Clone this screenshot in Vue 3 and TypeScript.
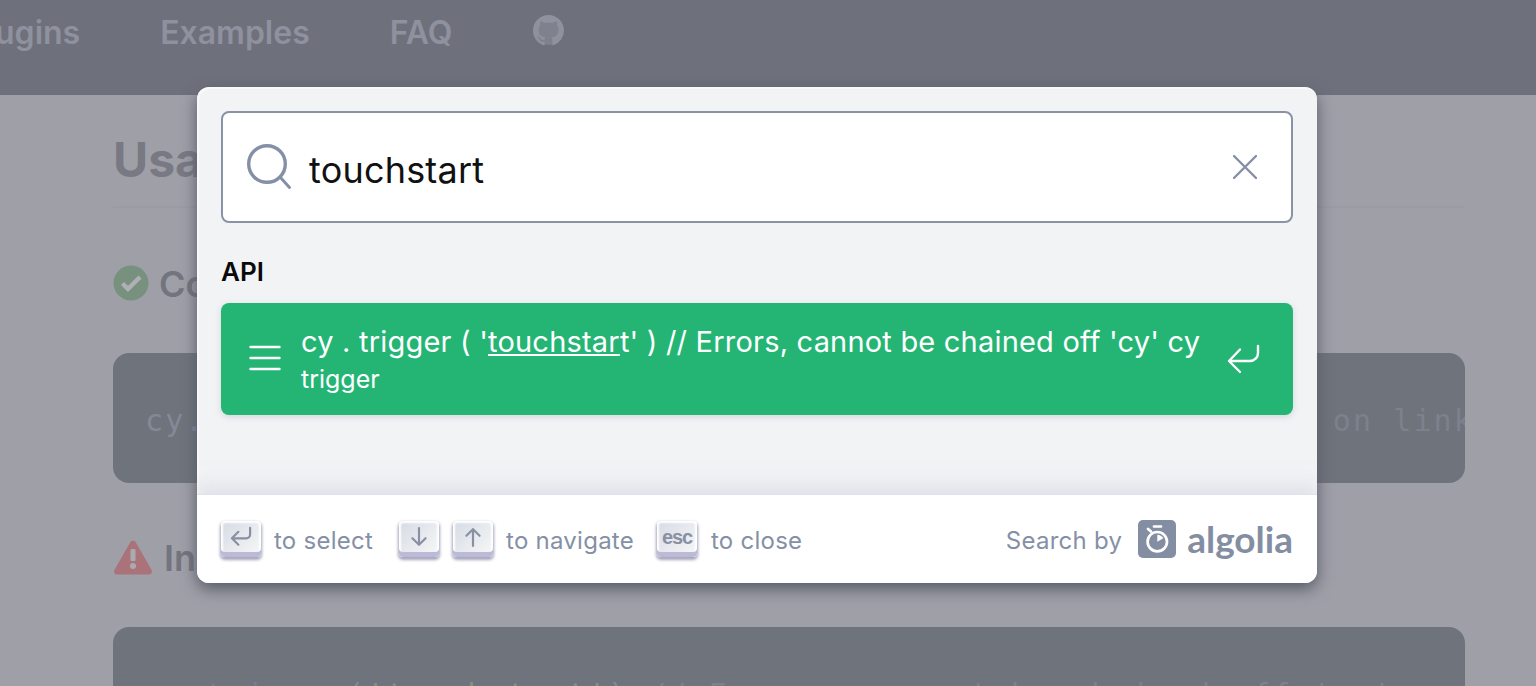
<script setup lang="ts">
const navItems = ['Plugins', 'Examples', 'FAQ']

const hit = {
  before: "cy . trigger ( '",
  match: 'touchstar',
  after: "t' ) // Errors, cannot be chained off 'cy' cy",
  path: 'trigger',
}
</script>

<template>
  <div class="page">
    <header class="topbar">
      <nav class="nav">
        <a v-for="item in navItems" :key="item" class="nav-link">{{ item }}</a>
        <svg class="gh" viewBox="0 0 16 16" width="31" height="31">
          <circle cx="8" cy="8" r="7.5" fill="currentColor" opacity="0.5" />
          <path
            fill="currentColor"
            d="M8 0C3.58 0 0 3.58 0 8c0 3.54 2.29 6.53 5.47 7.59.4.07.55-.17.55-.38 0-.19-.01-.82-.01-1.49-2.01.37-2.53-.49-2.69-.94-.09-.23-.48-.94-.82-1.13-.28-.15-.68-.52-.01-.53.63-.01 1.08.58 1.23.82.72 1.21 1.87.87 2.33.66.07-.52.28-.87.51-1.07-1.78-.2-3.64-.89-3.64-3.95 0-.87.31-1.59.82-2.15-.08-.2-.36-1.02.08-2.12 0 0 .67-.21 2.2.82.64-.18 1.32-.27 2-.27.68 0 1.36.09 2 .27 1.53-1.04 2.2-.82 2.2-.82.44 1.1.16 1.92.08 2.12.51.56.82 1.27.82 2.15 0 3.07-1.87 3.75-3.65 3.95.29.25.54.73.54 1.48 0 1.07-.01 1.93-.01 2.2 0 .21.15.46.55.38A8.01 8.01 0 0 0 16 8c0-4.42-3.58-8-8-8z"
          />
        </svg>
      </nav>
    </header>

    <main class="content">
      <h2 class="title">Usage</h2>

      <h3 class="subtitle">
        <svg class="sub-icon" viewBox="0 0 36 36" width="36" height="36">
          <circle cx="18" cy="18" r="17.5" fill="#78917f" />
          <path d="M9.5 18.5l5.5 5.5 12-12" fill="none" stroke="#aeb0b6" stroke-width="4.4" />
        </svg>
        <span class="sub-text">Correct Usage</span>
      </h3>
      <div class="code"><span class="c-name">cy</span><span class="c-punct">.</span><span class="c-fn">get</span><span class="c-punct">(</span><span class="c-str">'a'</span><span class="c-punct">).</span><span class="c-fn">trigger</span><span class="c-punct">(</span><span class="c-str">'touchstart'</span><span class="c-punct">)</span> <span class="c-comment">// Triggers 'touchstart' on link</span></div>

      <h3 class="subtitle sub-bad">
        <svg class="sub-icon warn-icon" viewBox="0 0 40 36" width="40" height="36">
          <path d="M20 1.5a3 3 0 0 1 2.6 1.5l16 28a3 3 0 0 1-2.6 4.5H4a3 3 0 0 1-2.6-4.5l16-28A3 3 0 0 1 20 1.5z" fill="#aa7279" />
          <rect x="17.5" y="10" width="5" height="12" rx="1" fill="#a9abb0" />
          <circle cx="20" cy="27" r="3" fill="#a9abb0" />
        </svg>
        <span class="sub-text">Incorrect Usage</span>
      </h3>
      <div class="code"><span class="c-name">cy</span><span class="c-punct">.</span><span class="c-fn">trigger</span><span class="c-punct">(</span><span class="c-str">'touchstart'</span><span class="c-punct">)</span> <span class="c-comment">// Errors, cannot be chained off 'cy'</span></div>
    </main>

    <div class="modal">
      <div class="search-head">
        <form class="search-box" @submit.prevent>
          <svg class="search-icon" viewBox="0 0 46 46" width="46" height="46">
            <circle cx="20" cy="20" r="18.3" fill="none" stroke="currentColor" stroke-width="3.4" />
            <path d="M33 33l9.5 10.5" fill="none" stroke="currentColor" stroke-width="3" stroke-linecap="round" />
          </svg>
          <span class="query">touchstart</span>
          <svg class="clear" viewBox="0 0 24 24" width="24" height="24">
            <path d="M1 1l22 22M23 1L1 23" fill="none" stroke="currentColor" stroke-width="2.4" stroke-linecap="round" />
          </svg>
        </form>
      </div>

      <div class="results">
        <div class="source">API</div>
        <div class="hit">
          <svg class="hit-icon" viewBox="0 0 32 26" width="32" height="26">
            <path d="M1.5 2h29M1.5 13h29M1.5 24h29" fill="none" stroke="currentColor" stroke-width="2.4" stroke-linecap="round" />
          </svg>
          <div class="hit-text">
            <div class="hit-title">{{ hit.before }}<u>{{ hit.match }}</u>{{ hit.after }}</div>
            <div class="hit-path">{{ hit.path }}</div>
          </div>
          <svg class="hit-enter" viewBox="0 0 34 30" width="34" height="30">
            <path d="M31 2v7a8 8 0 0 1-8 8H2M13 5.5L2 17l11 11" fill="none" stroke="currentColor" stroke-width="2.4" stroke-linecap="round" stroke-linejoin="round" />
          </svg>
        </div>
      </div>

      <footer class="foot">
        <ul class="commands">
          <li>
            <kbd class="key">
              <svg viewBox="0 0 20 20" width="26" height="26"><path d="M17 3v5a3 3 0 0 1-3 3H3M8 6l-5 5 5 5" fill="none" stroke="currentColor" stroke-width="1.7" stroke-linecap="round" stroke-linejoin="round" /></svg>
            </kbd>
            <span class="cmd-label">to select</span>
          </li>
          <li>
            <kbd class="key">
              <svg viewBox="0 0 20 20" width="24" height="24"><path d="M10 2.5v14M4.5 11l5.5 5.5 5.5-5.5" fill="none" stroke="currentColor" stroke-width="1.8" stroke-linecap="round" stroke-linejoin="round" /></svg>
            </kbd>
            <kbd class="key key-next">
              <svg viewBox="0 0 20 20" width="24" height="24"><path d="M10 17.5v-14M4.5 9L10 3.5 15.5 9" fill="none" stroke="currentColor" stroke-width="1.8" stroke-linecap="round" stroke-linejoin="round" /></svg>
            </kbd>
            <span class="cmd-label">to navigate</span>
          </li>
          <li class="cmd-close">
            <kbd class="key key-esc">esc</kbd>
            <span class="cmd-label">to close</span>
          </li>
        </ul>
        <div class="brand">
          <span class="by">Search by</span>
          <span class="logo-badge">
            <svg viewBox="0 0 38 38" width="38" height="38">
              <rect width="38" height="38" rx="5" fill="#848ea3" />
              <circle cx="19.3" cy="21.7" r="9.7" fill="none" stroke="#fff" stroke-width="2.7" />
              <path d="M19.3 21.7v-7a7 7 0 0 1 6 3.5z" fill="#fff" />
              <path d="M16 6.5h7M10 9l3 2.6" fill="none" stroke="#fff" stroke-width="2.7" stroke-linecap="round" />
            </svg>
          </span>
          <span class="logo-word">algolia</span>
        </div>
      </footer>
    </div>
  </div>
</template>

<style scoped>
.page {
  position: relative;
  height: 686px;
  overflow: hidden;
  background: #9f9fa8;
  font-family: Inter, 'Liberation Sans', sans-serif;
}

.topbar {
  height: 95px;
  background: #6e707c;
}

.nav {
  display: flex;
  align-items: flex-start;
  gap: 80px;
  padding-top: 15px;
  margin-left: -34px;
  color: #8f919e;
}

.nav-link {
  font-size: 32px;
  font-weight: 600;
  line-height: 36px;
}

.gh {
  margin-left: 1px;
  color: #8f919e;
}

.content {
  width: 1352px;
  margin-left: 113px;
}

.title {
  margin: 0;
  padding: 37px 0 0;
  height: 113px;
  box-sizing: border-box;
  border-bottom: 2px solid #9b9ba4;
  font-size: 48px;
  line-height: 56px;
  font-weight: 700;
  color: #787983;
}

.subtitle {
  box-sizing: border-box;
  display: flex;
  align-items: center;
  gap: 10px;
  margin: 0;
  height: 145px;
  padding-top: 4px;
  font-size: 36px;
  font-weight: 600;
  line-height: 44px;
  color: #72747e;
}

.sub-bad {
  height: 144px;
}

.sub-text {
  padding-top: 2px;
}

.warn-icon {
  margin-right: 1px;
}

.code {
  box-sizing: border-box;
  height: 130px;
  padding: 50px 32px;
  border-radius: 16px;
  background: #6f737c;
  font-family: 'DejaVu Sans Mono', 'Liberation Mono', monospace;
  font-size: 30px;
  line-height: 36px;
  letter-spacing: 2.07px;
  white-space: pre;
  overflow: hidden;
}

.c-name {
  color: #858997;
}

.c-punct {
  color: #7e8a9f;
}

.c-fn {
  color: #7d7a94;
}

.c-str {
  color: #87917f;
}

.c-comment {
  color: #7d818d;
}

.modal {
  position: absolute;
  left: 197px;
  top: 87px;
  width: 1120px;
  height: 496px;
  display: flex;
  flex-direction: column;
  border-radius: 12px;
  background: #f2f3f5;
  box-shadow:
    inset 2px 2px 0 0 rgba(255, 255, 255, 0.5),
    0 6px 16px 0 #555a64;
  overflow: hidden;
}

.search-head {
  padding: 24px 24px 0;
}

.search-box {
  box-sizing: border-box;
  display: flex;
  align-items: center;
  height: 112px;
  margin: 0;
  padding: 0 34px 0 24px;
  background: #fff;
  border: 2px solid #8a92a6;
  border-radius: 8px;
  color: #8590a6;
}

.search-icon {
  flex: none;
}

.query {
  flex: 1;
  margin-left: 16px;
  padding-top: 6px;
  font-size: 36px;
  line-height: 44px;
  letter-spacing: 0.2px;
  color: #111;
}

.clear {
  flex: none;
}

.results {
  flex: 1;
  padding: 0 24px;
}

.source {
  padding-top: 34px;
  font-size: 26px;
  line-height: 30px;
  font-weight: 600;
  color: #0a0a0a;
}

.hit {
  display: flex;
  align-items: center;
  box-sizing: border-box;
  height: 112px;
  margin-top: 16px;
  padding: 0 32px 0 28px;
  border-radius: 8px;
  background: #24b575;
  box-shadow: 0 2px 6px rgba(190, 195, 205, 0.6);
  color: #fff;
}

.hit-icon {
  flex: none;
  margin-top: -2px;
}

.hit-text {
  flex: 1;
  min-width: 0;
  margin-left: 20px;
}

.hit-title {
  font-size: 29px;
  line-height: 34px;
  letter-spacing: 0.2px;
  white-space: nowrap;
}

.hit-path {
  margin-top: 6px;
  font-size: 25px;
  line-height: 28px;
}

.hit-enter {
  flex: none;
}

.foot {
  position: relative;
  box-sizing: border-box;
  display: flex;
  align-items: center;
  justify-content: space-between;
  height: 89px;
  padding: 0 24px;
  background: #fff;
  border-top: 1px solid #dfe2ea;
  box-shadow: 0 -10px 16px rgba(210, 214, 226, 0.55);
}

.commands {
  display: flex;
  align-items: center;
  gap: 26px;
  margin: 0;
  padding: 0;
  list-style: none;
}

.commands li {
  display: flex;
  align-items: center;
  gap: 13px;
}

.commands li.cmd-close {
  margin-left: -3px;
}

.key {
  box-sizing: border-box;
  display: flex;
  align-items: center;
  justify-content: center;
  width: 40px;
  height: 36px;
  padding-bottom: 4px;
  border-radius: 4px;
  background: linear-gradient(-225deg, #d5dbe4, #f8f8f8);
  box-shadow:
    inset 0 -5px 0 0 #bdbad8,
    inset 0 0 2px 2px #fff,
    0 2px 3px 1px rgba(30, 35, 90, 0.4);
  color: #8a90a3;
}

.key-next {
  margin-left: 1px;
}

.key-esc {
  margin-right: 1px;
  font-family: 'Liberation Sans', sans-serif;
  font-weight: 700;
  font-size: 20px;
  letter-spacing: -1.2px;
}

.cmd-label {
  margin-top: 3px;
  font-size: 24px;
  line-height: 30px;
  letter-spacing: 0.25px;
  color: #8590a6;
}

.brand {
  display: flex;
  align-items: center;
  color: #8590a6;
}

.by {
  margin-top: 2px;
  margin-right: 16px;
  font-size: 24px;
  letter-spacing: 0.25px;
}

.logo-badge {
  display: flex;
  margin-right: 11px;
}

.logo-word {
  font-family: Lato, 'Noto Sans', sans-serif;
  font-size: 37px;
  line-height: 38px;
  font-weight: 700;
  color: #848ea3;
}
</style>

<style>
html,
body {
  margin: 0;
  background: #9f9fa8;
}
</style>
